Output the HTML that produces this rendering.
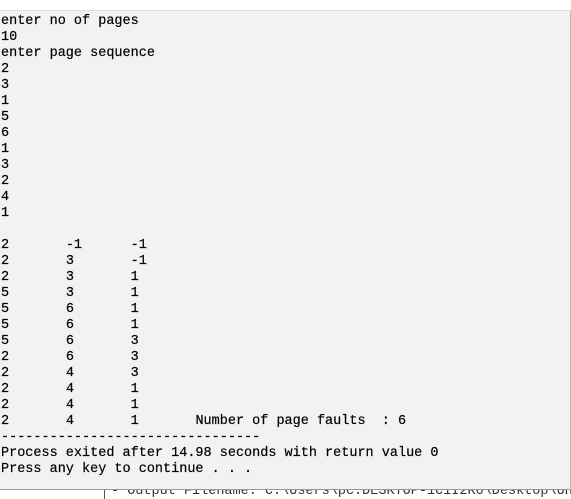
<!DOCTYPE html>
<html><head><style>
html,body{margin:0;padding:0;width:571px;height:499px;overflow:hidden;background:#fff}
#top{position:absolute;left:0;top:0;width:571px;height:10px;background:#fff;border-bottom:1px solid #ddd}
#con{position:absolute;left:0;top:11px;width:570px;height:478px;background:#f2f2f2;border-right:1px solid #bbb;border-bottom:1px solid #999}
pre{margin:0;padding:3px 0 0 1px;font-family:"Liberation Mono",monospace;font-size:13.5px;line-height:16px;color:#000;tab-size:8;-webkit-text-stroke:0.2px #000}
#bot{position:absolute;left:104px;top:490px;width:467px;height:9px;border-left:1px solid #555;overflow:hidden}
#bot span{position:absolute;left:6px;top:-6px;font-family:"Liberation Mono",monospace;font-size:13.5px;color:#333;white-space:pre}
</style></head><body>
<div id="top"></div>
<div id="con"><pre>enter no of pages
10
enter page sequence
2
3
1
5
6
1
3
2
4
1

2	-1	-1
2	3	-1
2	3	1
5	3	1
5	6	1
5	6	1
5	6	3
2	6	3
2	4	3
2	4	1
2	4	1
2	4	1	Number of page faults  : 6
--------------------------------
Process exited after 14.98 seconds with return value 0
Press any key to continue . . .</pre></div>
<div id="bot"><span>- Output Filename: C:\Users\pc.DESKTOP-1C1I2K6\Desktop\Unt</span></div>
</body></html>
